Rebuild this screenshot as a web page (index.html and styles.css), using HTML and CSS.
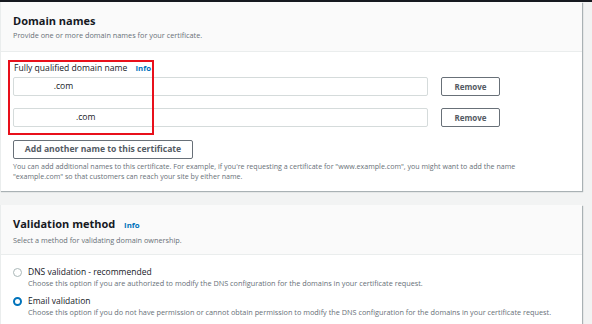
FILE: index.html
```html
<!DOCTYPE HTML>
<html>
<head>
<meta http-equiv="Content-Type" content="text/html; charset=utf-8">
<title>Request certificate</title>
<link rel="stylesheet" href="styles.css">
</head>

<body>
<div id="topbar"></div>
<div id="page">
	<div class="card">
		<div class="cardHeader">
			<h2>Domain names</h2>
			<p class="desc">Provide one or more domain names for your certificate.</p>
		</div>
		<div class="cardBody">
			<div class="highlight"></div>
			<div class="label">Fully qualified domain name <a href="javascript:;" class="info">Info</a></div>
			<div class="row">
				<div class="input"><span class="hidden">mydom</span>.com</div>
				<a href="javascript:;" class="btn small">Remove</a>
			</div>
			<div class="row">
				<div class="input"><span class="hidden">www.mydom</span>.com</div>
				<a href="javascript:;" class="btn small">Remove</a>
			</div>
			<a href="javascript:;" class="btn add">Add another name to this certificate</a>
			<p class="hint">You can add additional names to this certificate. For example, if you're requesting a certificate for "www.example.com", you might want to add the name "example.com" so that customers can reach your site by either name.</p>
		</div>
	</div>
	<div class="card">
		<div class="cardHeader">
			<h2>Validation method <a href="javascript:;" class="info">Info</a></h2>
			<p class="desc">Select a method for validating domain ownership.</p>
		</div>
		<div class="cardBody radios">
			<div class="radio">
				<span class="dot"></span>
				<div>
					<div class="radioLabel">DNS validation - recommended</div>
					<div class="radioDesc">Choose this option if you are authorized to modify the DNS configuration for the domains in your certificate request.</div>
				</div>
			</div>
			<div class="radio">
				<span class="dot on"></span>
				<div>
					<div class="radioLabel">Email validation</div>
					<div class="radioDesc">Choose this option if you do not have permission or cannot obtain permission to modify the DNS configuration for the domains in your certificate request.</div>
				</div>
			</div>
		</div>
	</div>
</div>
</body>
</html>
```

FILE: styles.css
```css
/* reset start */
html,body{ overflow:hidden; height:100%;}
body,h2,p{ padding:0; margin:0;}
body{ background:#f2f3f3; font-family:"Open Sans", "Noto Sans", sans-serif; color:#16191f;}
a{ text-decoration:none;}
/* reset end */

/* frame start */
#topbar{ height:2px; background:#16191f;}
#page{ width:582px;}
.card{ background:white; border-left:1px solid #eaeded; box-shadow:1px 1px 1px rgba(0,28,36,.3); margin-bottom:14px;}
.cardHeader{ background:#fafafa; border-bottom:1px solid #eaeded; padding:10px 12px 8px; height:31px;}
.cardHeader h2{ font-size:11px; font-weight:700; line-height:17px;}
.cardHeader .desc{ font-size:7.3px; line-height:13px; color:#687078;}
.cardBody{ padding:9px 12px 10px; position:relative;}
.info{ color:#0073bb; font-weight:700; font-size:7.8px; margin-left:6px;}
/* frame end */

/* domain names start */
.highlight{ position:absolute; left:7px; top:8px; width:142px; height:71px; border:2px solid #e8101b;}
.label{ font-size:8.6px; line-height:14px; padding-left:1px;}
.row{ display:flex; align-items:center; margin-top:2px;}
.row + .row{ margin-top:12px;}
.input{ width:404px; height:17px; border:1px solid #d5dbdb; border-radius:2px; font-size:8.6px; line-height:17px; padding-left:9px; margin-right:13px;}
.input .hidden{ color:white;}
.btn{ display:inline-block; border:1px solid #687078; border-radius:2px; color:#545b64; font-weight:700; text-align:center;}
.btn.small{ width:57px; height:17px; line-height:17px; font-size:8px;}
.btn.add{ margin-top:13px; width:178px; height:17px; line-height:17px; font-size:8.6px;}
.hint{ font-size:7.1px; line-height:10px; color:#687078; margin-top:2px; width:530px;}
/* domain names end */

/* validation start */
.radios{ padding-top:10px;}
.radio{ display:flex; margin-bottom:5px;}
.dot{ width:7px; height:7px; border:1.5px solid #aab7b8; border-radius:50%; margin:3px 6px 0 0; flex-shrink:0; background:white;}
.dot.on{ width:5px; height:5px; border:2.5px solid #0073bb;}
.radioLabel{ font-size:8.5px; line-height:12px; padding-top:1px;}
.radioDesc{ font-size:7.3px; line-height:11px; color:#687078;}
/* validation end */
```
